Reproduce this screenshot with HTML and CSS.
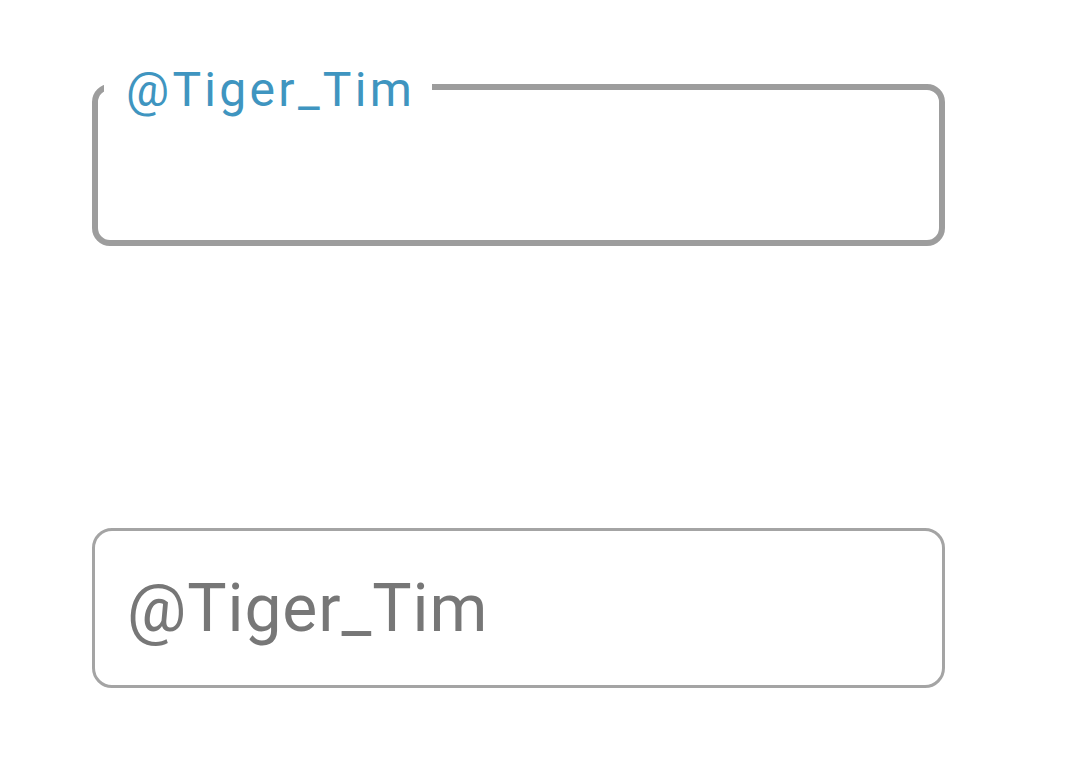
FILE: index.html
```html
<!DOCTYPE html>
<html lang="en">
<head>
<meta charset="utf-8">
<title>Outlined fields</title>
<link rel="stylesheet" href="styles.css">
</head>
<body>
<main class="page">
  <fieldset class="field field--focused">
    <legend class="field__label">@Tiger_Tim</legend>
  </fieldset>
  <div class="field field--idle">
    <span class="field__placeholder">@Tiger_Tim</span>
  </div>
</main>
</body>
</html>
```

FILE: styles.css
```css
html, body {
  margin: 0;
  padding: 0;
  background: #ffffff;
}

.page {
  display: flex;
  flex-direction: column;
  padding: 60px 0 0 92px;
  width: 853px;
  gap: 282px;
  font-family: Roboto, "Noto Sans", sans-serif;
}

.field {
  box-sizing: border-box;
  width: 853px;
  margin: 0;
}

.field--focused {
  height: 186px;
  border: 6px solid #9d9d9d;
  border-radius: 18px;
  padding: 0;
}

.field__label {
  margin-left: 6px;
  padding: 6px 17px 0 22px;
  font-size: 48px;
  line-height: 48px;
  letter-spacing: 3.3px;
  color: #3f95c0;
}

.field--idle {
  height: 160px;
  border: 3px solid #a4a4a4;
  border-radius: 20px;
  display: flex;
  align-items: center;
  padding: 0 0 0 32px;
}

.field__placeholder {
  font-size: 66px;
  letter-spacing: 0.9px;
  color: #777777;
  line-height: 1;
  padding-top: 2px;
}
```
